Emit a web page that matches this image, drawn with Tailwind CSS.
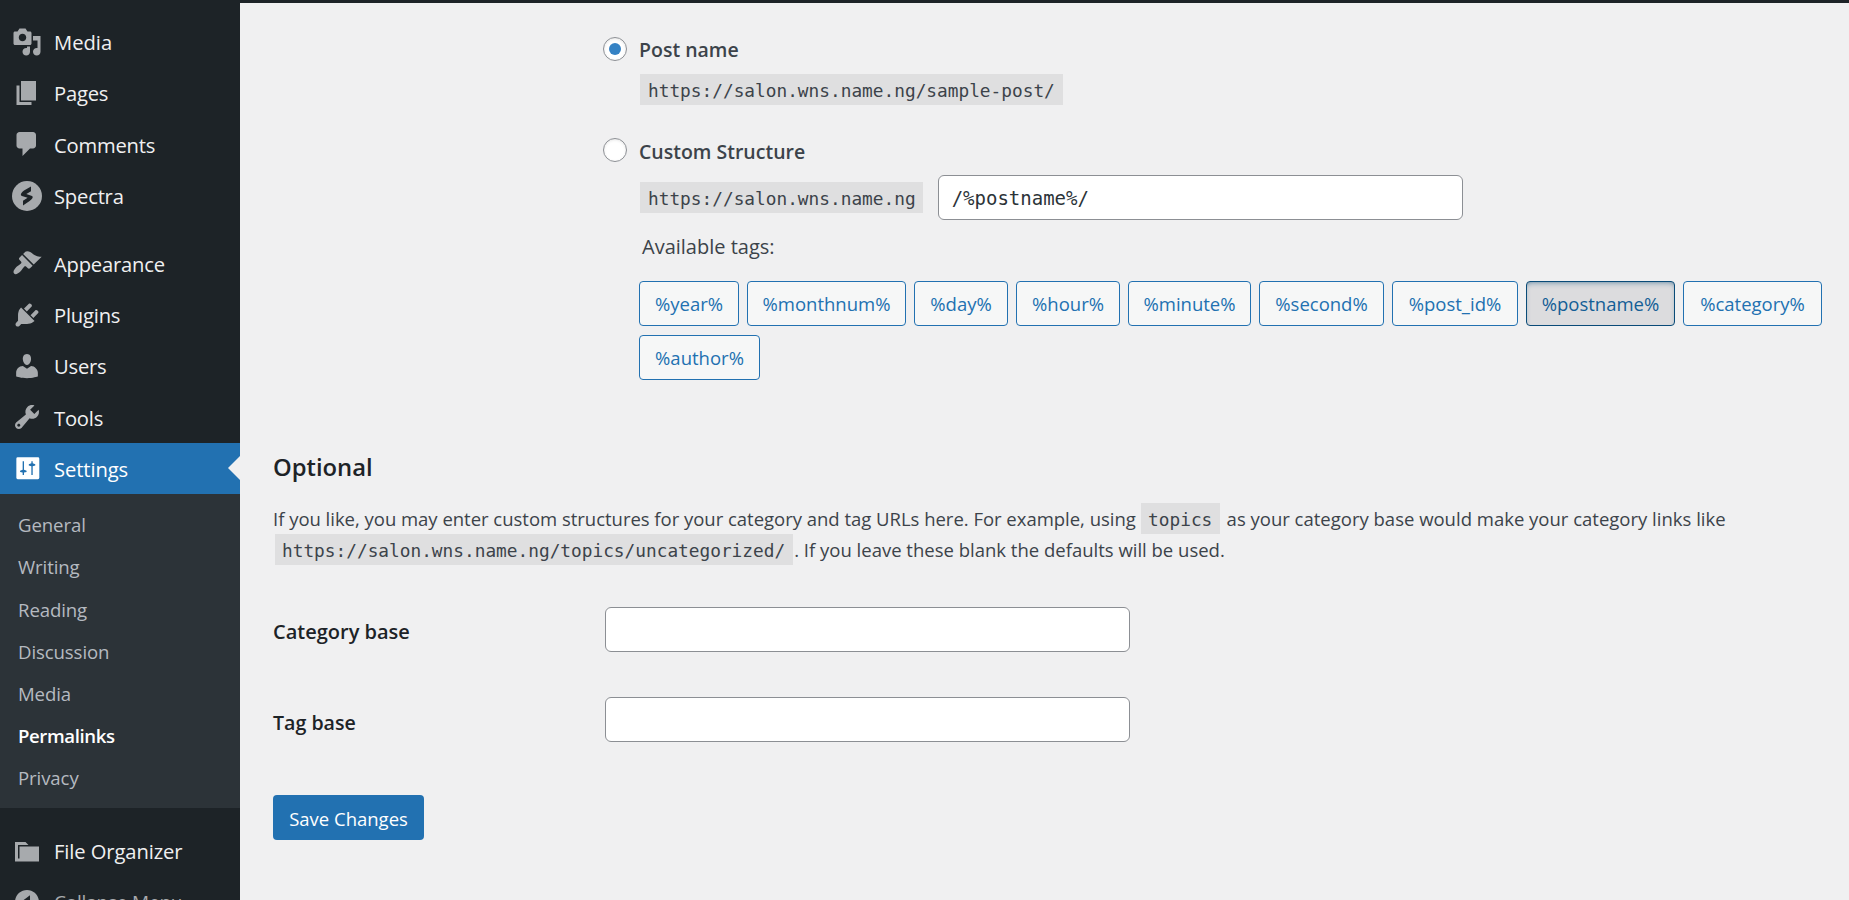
<!DOCTYPE html>
<html lang="en">
<head>
    <meta charset="UTF-8">
    <meta name="viewport" content="width=device-width, initial-scale=1.0">
    <title>Permalink Settings</title>
    <script src="https://cdn.jsdelivr.net/npm/@tailwindcss/browser@4"></script>
</head>
<body class="h-[900px] overflow-hidden bg-[#f0f0f1] text-[#3c434a] font-['Open_Sans','Noto_Sans',sans-serif] flex flex-col">
    <!-- Admin bar edge -->
    <div class="h-[3px] shrink-0 bg-[#1d2327]"></div>

    <div class="flex h-[897px] overflow-hidden">
        <!-- Admin menu -->
        <nav class="w-60 h-full shrink-0 overflow-hidden bg-[#1d2327] text-[#f0f0f1] text-[20.2px] tracking-[-0.2px] pt-[13px]">
            <ul>
                <li class="flex items-center h-[51.3px] pl-3">
                    <svg class="size-[30px] fill-[#a7aaad]" viewBox="0 0 20 20"><path d="M13 11V4c0-.55-.45-1-1-1h-1.67L9 1H5L3.67 3H2c-.55 0-1 .45-1 1v7c0 .55.45 1 1 1h10c.55 0 1-.45 1-1zM7 4.5c1.38 0 2.5 1.12 2.5 2.5S8.38 9.5 7 9.5 4.5 8.38 4.5 7 5.62 4.5 7 4.5zM14 6h5v10.5c0 1.38-1.12 2.5-2.5 2.5S14 17.88 14 16.5s1.12-2.5 2.5-2.5c.17 0 .34.02.5.05V9h-3V6zm-4 8.05V13h2v3.5c0 1.38-1.12 2.5-2.5 2.5S7 17.88 7 16.5 8.12 14 9.5 14c.17 0 .34.02.5.05z"/></svg>
                    <span class="ml-3 pt-px tracking-normal">Media</span>
                </li>
                <li class="flex items-center h-[51.3px] pl-3">
                    <svg class="size-[30px] fill-[#a7aaad]" viewBox="0 0 20 20"><path d="M6 15V2h10v13H6zm-1 1h8v2H3V5h2v11z"/></svg>
                    <span class="ml-3 pt-px">Pages</span>
                </li>
                <li class="flex items-center h-[51.3px] pl-3">
                    <svg class="size-[30px] fill-[#a7aaad]" viewBox="0 0 20 20"><path d="M5 2h9c1.1 0 2 .9 2 2v7c0 1.1-.9 2-2 2h-2l-5 5v-5H5c-1.1 0-2-.9-2-2V4c0-1.1.9-2 2-2z"/></svg>
                    <span class="ml-3 pt-px">Comments</span>
                </li>
                <li class="flex items-center h-[51.3px] pl-3">
                    <svg class="size-[30px]" viewBox="0 0 30 30"><circle cx="15" cy="15" r="15" fill="#a7aaad"/><path fill="#1d2327" d="M19 5.500v4.700l-4.700 2.900 5.700 1.800c.9.4.9 1.600.2 2.600-.7 1-1.500 1.800-2.600 2.500L11 24.400v-4.600l4.600-3-5.700-1.700c-1.200-.4-1.300-1.600-.6-2.800.7-1.100 1.600-2 2.700-2.700z"/></svg>
                    <span class="ml-3 pt-px">Spectra</span>
                </li>
                <li class="h-[16.5px]"></li>
                <li class="flex items-center h-[51.3px] pl-3">
                    <svg class="size-[30px] fill-[#a7aaad]" viewBox="0 0 20 20"><path d="M14.48 11.06L7.41 3.99l1.5-1.5c.5-.56 2.3-.47 3.51.32 1.21.8 1.43 1.28 2.91 2.1 1.18.64 2.45 1.26 4.45.85zm-.71.71L6.7 4.7 4.93 6.47c-.39.39-.39 1.02 0 1.41l1.06 1.06c.39.39.39 1.03 0 1.42-.6.6-1.43 1.11-2.21 1.69-.35.26-.7.53-1.01.84C1.43 14.23.4 16.08 1.4 17.07c.99 1 2.84-.03 4.18-1.36.31-.31.58-.66.85-1.02.57-.78 1.08-1.61 1.69-2.21.39-.39 1.02-.39 1.41 0l1.06 1.06c.39.39 1.02.39 1.41 0z"/></svg>
                    <span class="ml-3 pt-px">Appearance</span>
                </li>
                <li class="flex items-center h-[51.3px] pl-3">
                    <svg class="size-[30px] fill-[#a7aaad]" viewBox="0 0 20 20"><path d="M13.11 4.36L9.87 7.6 8 5.73l3.24-3.24c.35-.34 1.05-.2 1.56.32.52.51.66 1.21.31 1.55zm-8 1.77l.91-1.12 9.01 9.01-1.19.84c-.71.71-2.63 1.16-3.82 1.16H6.14L4.9 17.26c-.59.59-1.54.59-2.12 0-.59-.58-.59-1.53 0-2.12l1.24-1.24v-3.88c0-1.13.4-3.19 1.09-3.89zm7.26 3.97l3.24-3.24c.34-.35 1.04-.21 1.55.31.52.51.66 1.21.31 1.55l-3.24 3.25z"/></svg>
                    <span class="ml-3 pt-px">Plugins</span>
                </li>
                <li class="flex items-center h-[51.3px] pl-3">
                    <svg class="size-[30px] fill-[#a7aaad]" viewBox="0 0 20 20"><path d="M10 9.25c-2.27 0-2.73-3.44-2.73-3.44C7 4.02 7.82 2 9.97 2c2.16 0 2.98 2.02 2.71 3.81 0 0-.41 3.44-2.68 3.44zm0 2.57L12.72 10c2.39 0 4.52 2.33 4.52 4.53v2.49s-3.65 1.13-7.24 1.13c-3.65 0-7.24-1.13-7.24-1.13v-2.49c0-2.25 1.94-4.48 4.47-4.48z"/></svg>
                    <span class="ml-3 pt-px">Users</span>
                </li>
                <li class="flex items-center h-[51.3px] pl-3">
                    <svg class="size-[30px] fill-[#a7aaad]" viewBox="0 0 20 20"><path d="M16.68 9.77c-1.34 1.34-3.3 1.67-4.95.99l-5.41 6.52c-.99.99-2.59.99-3.58 0s-.99-2.59 0-3.57l6.52-5.42c-.68-1.65-.35-3.61.99-4.95 1.28-1.28 3.12-1.62 4.72-1.06l-2.89 2.89 2.82 2.82 2.86-2.87c.53 1.58.18 3.39-1.08 4.65zM3.81 16.21c.4.39 1.04.39 1.43 0 .4-.4.4-1.04 0-1.43-.39-.4-1.03-.4-1.43 0-.39.39-.39 1.03 0 1.43z"/></svg>
                    <span class="ml-3 pt-px">Tools</span>
                </li>
                <li class="relative flex items-center h-[51.3px] pl-3 bg-[#2271b1] text-white">
                    <svg class="size-[30px]" viewBox="0 0 20 20">
                        <rect x="2.9" y="2.2" width="15.3" height="14.6" rx="0.9" fill="#fff"/>
                        <path fill="#2271b1" d="M7.100 4.800h.9v5.700l1.700.6v.9l-1.700.4v1.600h-.9v-1.600l-1.700-.4v-.9l1.700-.6zM12.900 14v-5.900l-1.700-.4v-.9l1.700-.6V4.800h.9v1.400l1.700.6v.9l-1.700.4V14z"/>
                    </svg>
                    <span class="ml-3 pt-0.5 tracking-[-0.1px]">Settings</span>
                    <span class="absolute right-0 top-[13.5px] border-y-[12px] border-y-transparent border-r-[12px] border-r-[#f0f0f1]"></span>
                </li>
            </ul>

            <!-- Settings submenu -->
            <ul class="h-[313.7px] bg-[#2c3338] pt-[10px] pl-[18px] text-[18.6px] tracking-[-0.1px] leading-[42.2px] text-[#b5bac0]">
                <li>General</li>
                <li>Writing</li>
                <li>Reading</li>
                <li>Discussion</li>
                <li>Media</li>
                <li class="font-semibold tracking-[-0.4px] text-white">Permalinks</li>
                <li>Privacy</li>
            </ul>

            <ul class="pt-[17.5px]">
                <li class="flex items-center h-[51.3px] pl-3">
                    <svg class="size-[30px] fill-[#a7aaad]" viewBox="0 0 20 20"><path d="M5 7h13v10H2V4h7l2 2H4v9h1V7z"/></svg>
                    <span class="ml-3 tracking-[-0.1px]">File Organizer</span>
                </li>
                <li class="flex items-center h-[51.3px] pl-3 text-[19px] text-[#a7aaad]">
                    <svg class="size-[30px] fill-[#a7aaad]" viewBox="0 0 20 20"><path fill-rule="evenodd" d="M10 2c4.42 0 8 3.58 8 8s-3.58 8-8 8-8-3.58-8-8 3.58-8 8-8zm2 3.5L6 10l6 4.5z"/></svg>
                    <span class="ml-3">Collapse Menu</span>
                </li>
            </ul>
        </nav>

        <!-- Permalink settings form -->
        <main class="grow pl-[33px] text-[18.5px]">
            <div class="pl-[330px]">
                <label class="flex items-center h-[46px] mt-[23px] text-[19.5px] font-semibold">
                    <span class="flex items-center justify-center size-6 rounded-full border border-[#8c8f94] bg-white shadow-[inset_0_1px_3px_rgba(0,0,0,0.1)]">
                        <span class="size-3 mb-px rounded-full bg-[#3582c4]"></span>
                    </span>
                    <span class="ml-3 pt-0.5">Post name</span>
                </label>
                <div class="flex mt-0.5 pl-[37px]">
                    <code class="h-[31px] px-[8px] bg-black/7 font-['DejaVu_Sans_Mono',monospace] text-[17.8px] leading-[33px]">https://salon.wns.name.ng/sample-post/</code>
                </div>

                <label class="flex items-center h-[46px] mt-[22px] text-[19.5px] font-semibold">
                    <span class="size-6 rounded-full border border-[#8c8f94] bg-white shadow-[inset_0_1px_3px_rgba(0,0,0,0.1)]"></span>
                    <span class="ml-3 pt-[3px]">Custom Structure</span>
                </label>
                <div class="flex items-center mt-0.5 pl-[37px]">
                    <code class="h-[31px] pl-[8px] pr-[7px] bg-black/7 font-['DejaVu_Sans_Mono',monospace] text-[17.8px] leading-[33px]">https://salon.wns.name.ng</code>
                    <input type="text" value="/%postname%/" class="ml-[15px] w-[525px] h-[45px] px-[13px] pt-px rounded-md border border-[#8c8f94] bg-white text-[#2c3338] font-['DejaVu_Sans_Mono',monospace] text-[19px]">
                </div>

                <p class="mt-[13px] pl-[39px] text-[20px] leading-[27px]">Available tags:</p>

                <!-- Structure tags -->
                <div class="flex flex-wrap gap-x-2 gap-y-[9px] mt-[21px] pl-[36px] text-[18.5px] text-[#2271b1]">
                    <button class="w-[100px] h-[45px] pt-px rounded border border-[#2271b1] bg-[#f6f7f7]">%year%</button>
                    <button class="w-[159px] h-[45px] pt-px rounded border border-[#2271b1] bg-[#f6f7f7]">%monthnum%</button>
                    <button class="w-[94px] h-[45px] pt-px rounded border border-[#2271b1] bg-[#f6f7f7]">%day%</button>
                    <button class="w-[104px] h-[45px] pt-px rounded border border-[#2271b1] bg-[#f6f7f7]">%hour%</button>
                    <button class="w-[123px] h-[45px] pt-px rounded border border-[#2271b1] bg-[#f6f7f7]">%minute%</button>
                    <button class="w-[125px] h-[45px] pt-px rounded border border-[#2271b1] bg-[#f6f7f7]">%second%</button>
                    <button class="w-[126px] h-[45px] pt-px rounded border border-[#2271b1] bg-[#f6f7f7]">%post_id%</button>
                    <button class="w-[149px] h-[45px] pt-px rounded border border-[#0a4b78] bg-[#dcdcde] text-[#135e96] shadow-[inset_0_3px_7.5px_-4.5px_#0a4b78]">%postname%</button>
                    <button class="w-[139px] h-[45px] pt-px rounded border border-[#2271b1] bg-[#f6f7f7]">%category%</button>
                    <button class="w-[121px] h-[45px] pt-px rounded border border-[#2271b1] bg-[#f6f7f7]">%author%</button>
                </div>
            </div>

            <h2 class="mt-[69px] text-[23.8px] leading-9 font-semibold text-[#1d2327]">Optional</h2>

            <p class="mt-[18px] leading-[31px] whitespace-nowrap">
                <span class="tracking-[-0.02px]">If you like, you may enter custom structures for your category and tag URLs here. For example, using</span>
                <code class="inline-block h-[31px] align-top ml-0 mr-[2px] px-[7.5px] bg-black/7 font-['DejaVu_Sans_Mono',monospace] text-[17.8px] leading-[33px]">topics</code>
                as your category base would make your category links like<br>
                <code class="inline-block h-[31px] align-top mx-[1.5px] px-[7.5px] bg-black/7 font-['DejaVu_Sans_Mono',monospace] text-[17.8px] leading-[33px]">https://salon.wns.name.ng/topics/uncategorized/</code>. If you leave these blank the defaults will be used.
            </p>

            <div class="flex items-center h-[45px] mt-[42px]">
                <label class="w-[332px] pt-[5px] text-[20px] font-semibold text-[#1d2327]">Category base</label>
                <input type="text" class="w-[525px] h-[45px] rounded-md border border-[#8c8f94] bg-white">
            </div>
            <div class="flex items-center h-[45px] mt-[45px]">
                <label class="w-[332px] pt-[6px] text-[19.6px] font-semibold text-[#1d2327]">Tag base</label>
                <input type="text" class="w-[525px] h-[45px] rounded-md border border-[#8c8f94] bg-white">
            </div>

            <button class="mt-[53px] w-[151px] h-[45px] pt-[3px] rounded bg-[#2271b1] text-white">Save Changes</button>
        </main>
    </div>
</body>
</html>
